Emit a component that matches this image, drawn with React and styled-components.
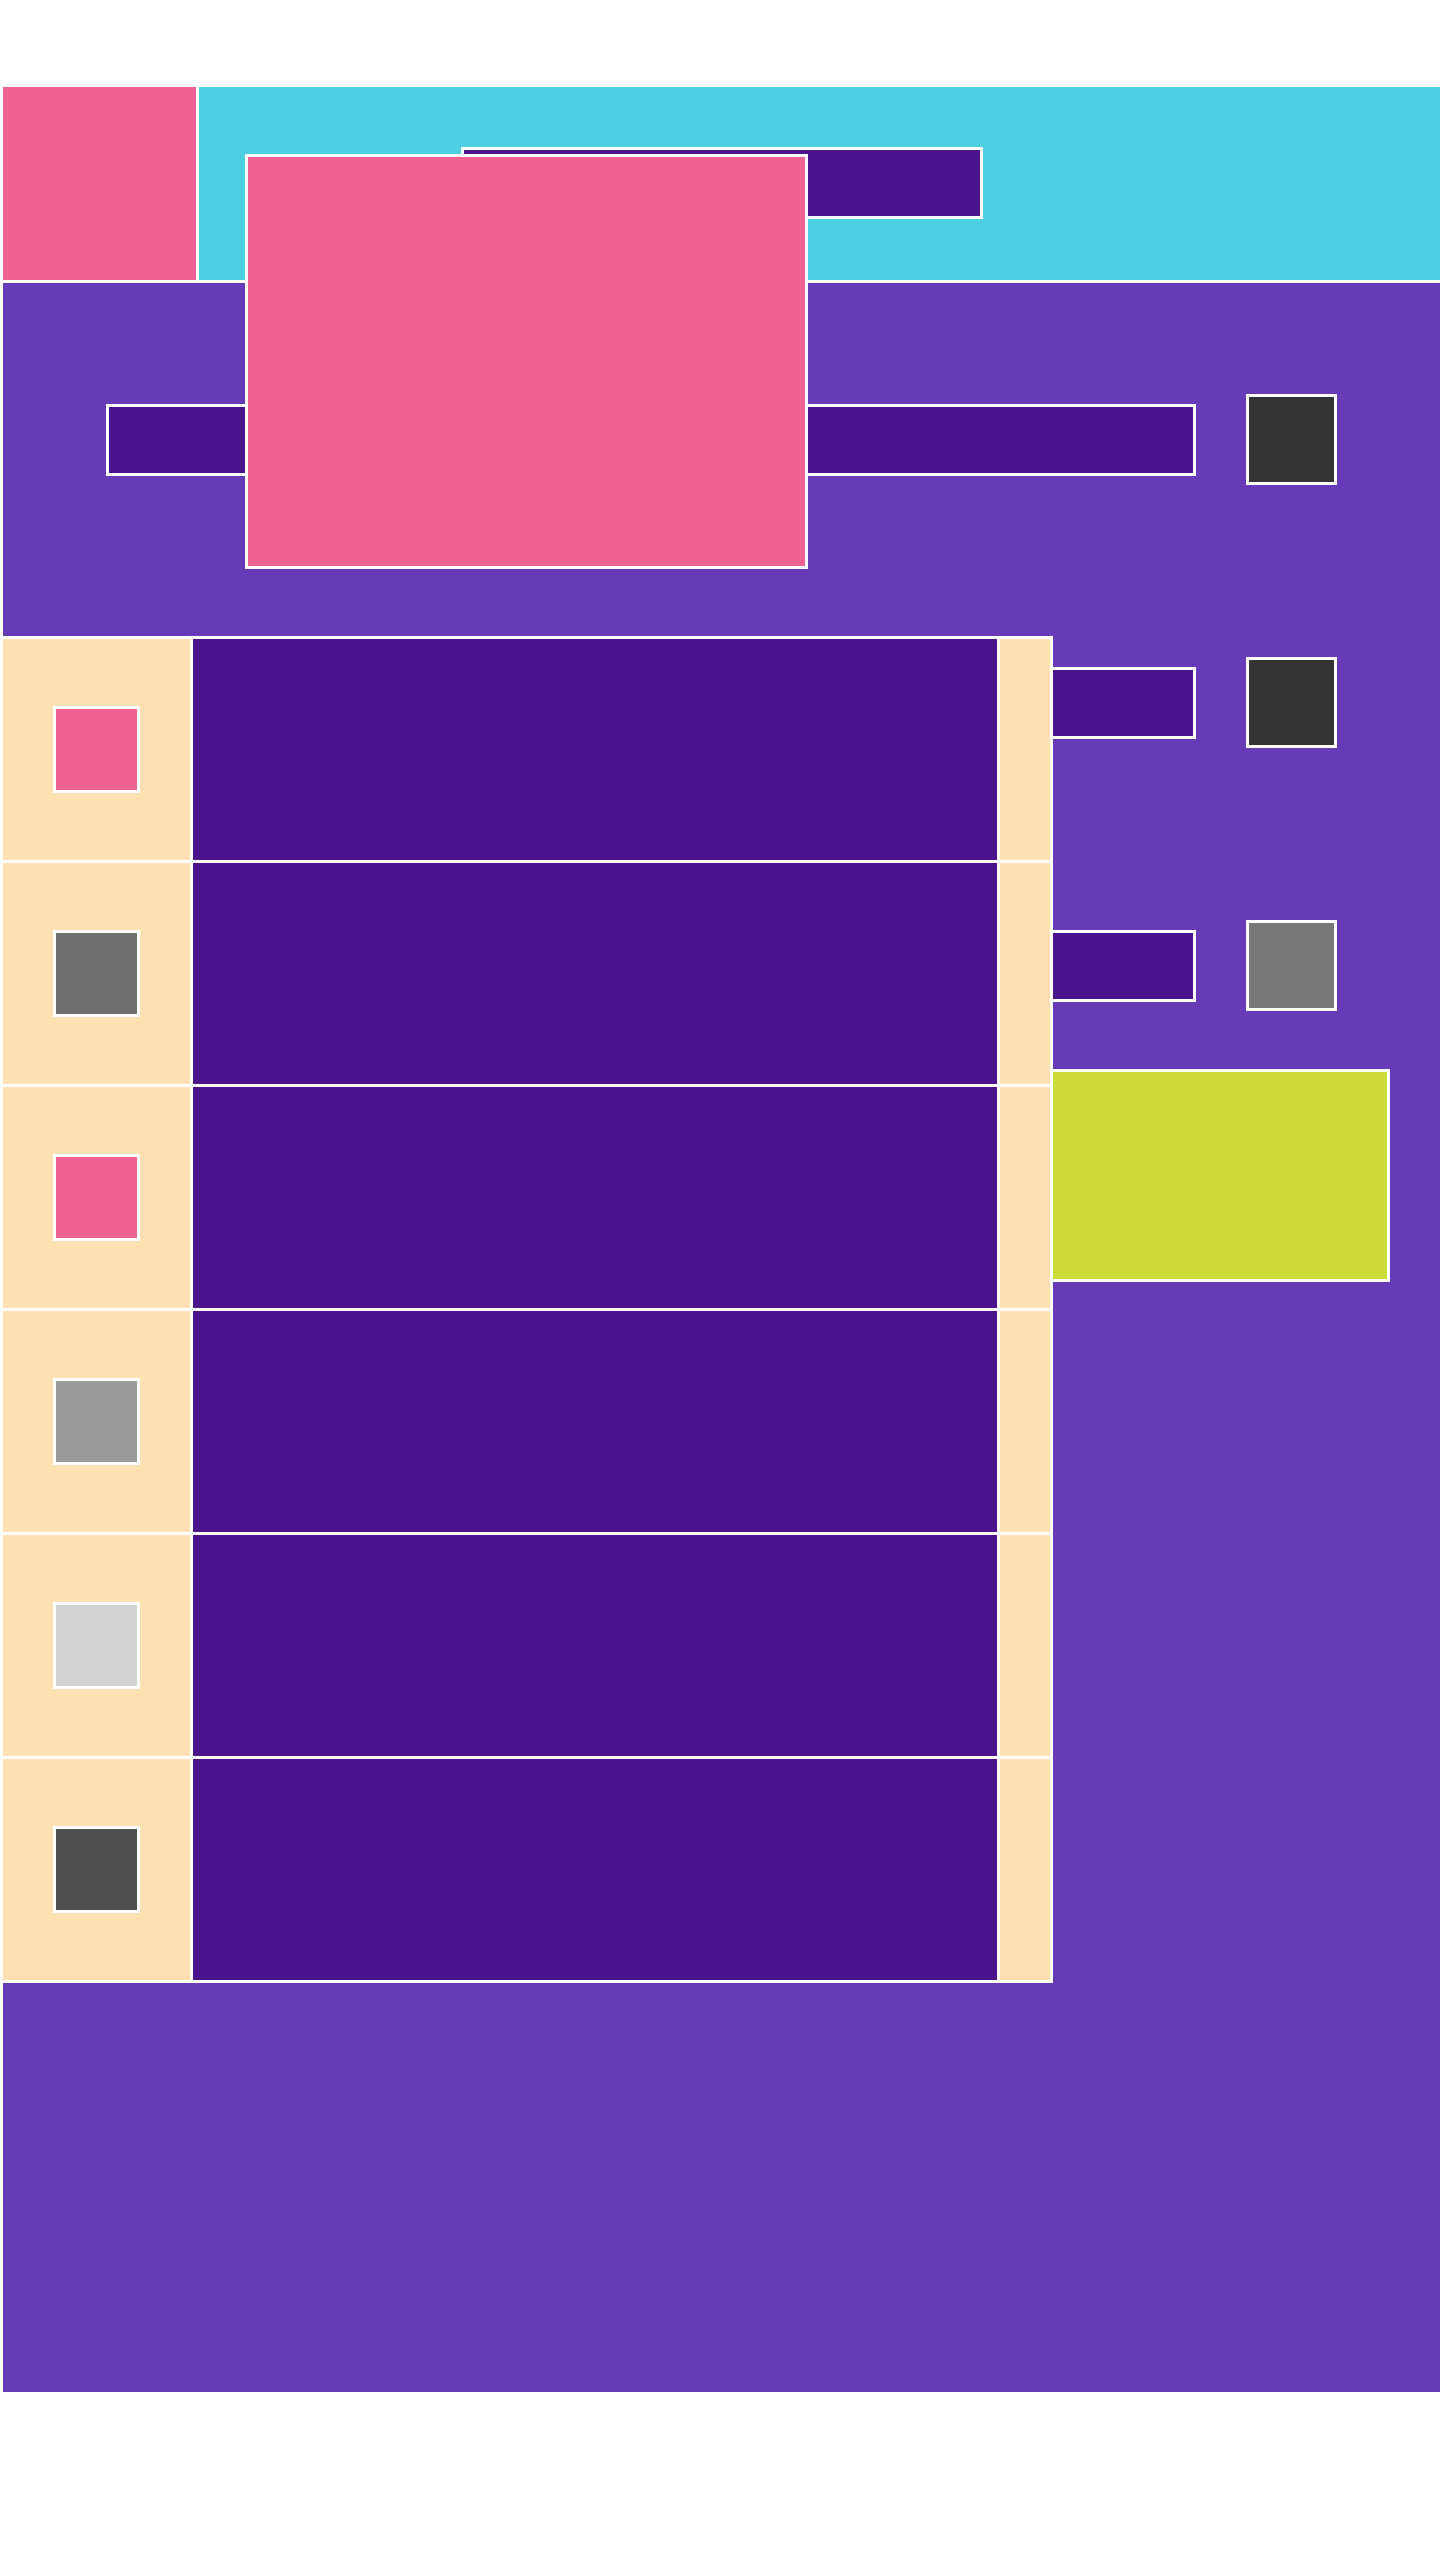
import React from 'react';
import styled, { createGlobalStyle } from 'styled-components';

const GlobalStyle = createGlobalStyle`
  *, *::before, *::after {
    box-sizing: border-box;
  }
  html, body {
    margin: 0;
    padding: 0;
    background: #fff;
    font-family: 'Liberation Sans', Arial, sans-serif;
    overflow-x: hidden;
  }
`;

const pink = '#f06292';
const deep = '#4a148c';

const swatches = [pink, '#707070', pink, '#9a9a9a', '#d3d3d3', '#4f4f4f'];
const fields = ['#333333', '#333333', '#787878'];

const App = () => {
    return (
        <>
            <GlobalStyle />
            <Shell>
                <Header>
                    <Logo />
                    <SearchBar />
                </Header>
                <Main>
                    <Form>
                        {fields.map((color, i) => (
                            <FieldRow key={i}>
                                <Field />
                                <ColorBox $color={color} />
                            </FieldRow>
                        ))}
                    </Form>
                    <Submit />
                </Main>
                <Popup />
                <Dropdown>
                    {swatches.map((color, i) => (
                        <Option key={i}>
                            <SwatchCell>
                                <Swatch $color={color} />
                            </SwatchCell>
                            <LabelCell />
                            <EndCell />
                        </Option>
                    ))}
                </Dropdown>
            </Shell>
        </>
    );
};

export default App;

const Shell = styled.div`
    position: relative;
    width: 1440px;
    margin-top: 84px;
`;

const Header = styled.header`
    display: flex;
    align-items: flex-start;
    height: 199px;
    border: 3px solid #fff;
    border-right: none;
    background: #4dd0e1;
`;

const Logo = styled.div`
    flex: none;
    width: 196px;
    height: 100%;
    background: ${pink};
    border-right: 3px solid #fff;
`;

const SearchBar = styled.div`
    width: 522px;
    height: 72px;
    margin: 60px 0 0 262px;
    background: ${deep};
    border: 3px solid #fff;
`;

const Main = styled.main`
    height: 2109px;
    padding: 111px 0 0 103px;
    background: #673ab7;
    border-left: 3px solid #fff;
`;

const Form = styled.div`
    display: flex;
    flex-direction: column;
    gap: 172px;
`;

const FieldRow = styled.div`
    display: flex;
    align-items: center;
    gap: 50px;
    height: 91px;
`;

const Field = styled.div`
    width: 1090px;
    height: 72px;
    background: ${deep};
    border: 3px solid #fff;
`;

const ColorBox = styled.div`
    width: 91px;
    height: 91px;
    background: ${(p) => p.$color};
    border: 3px solid #fff;
`;

const Submit = styled.div`
    width: 1284px;
    height: 213px;
    margin-top: 58px;
    background: #cddc39;
    border: 3px solid #fff;
`;

const Popup = styled.div`
    position: absolute;
    top: 70px;
    left: 245px;
    width: 563px;
    height: 415px;
    background: ${pink};
    border: 3px solid #fff;
`;

const Dropdown = styled.div`
    position: absolute;
    top: 552px;
    left: 0;
    width: 1053px;
    border: 3px solid #fff;
    border-bottom: none;
`;

const Option = styled.div`
    display: grid;
    grid-template-columns: 187px 804px 50px;
    column-gap: 3px;
    height: 224px;
    background: #fff;
    border-bottom: 3px solid #fff;
`;

const SwatchCell = styled.div`
    display: flex;
    align-items: center;
    justify-content: center;
    background: #ffe0b2;
`;

const Swatch = styled.div`
    width: 87px;
    height: 87px;
    background: ${(p) => p.$color};
    border: 3px solid #fff;
`;

const LabelCell = styled.div`
    background: ${deep};
`;

const EndCell = styled.div`
    background: #ffe0b2;
`;
